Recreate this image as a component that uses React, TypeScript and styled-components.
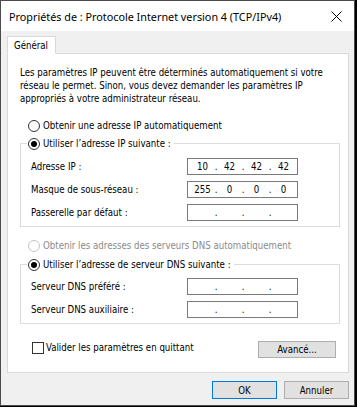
import React from "react";
import styled, { createGlobalStyle } from "styled-components";

const Global = createGlobalStyle`
  html, body { margin: 0; padding: 0; background: #000; }
  body { width: 357px; height: 407px; overflow: hidden; }
  * { box-sizing: border-box; }
`;

const FONT = `"DejaVu Sans Condensed", "DejaVu Sans", "Liberation Sans", sans-serif`;

const Window = styled.div`
  width: 355px;
  height: 406px;
  border: 1px solid #4b4b4b;
  background: #f0f0f0;
  display: flex;
  flex-direction: column;
  font-family: ${FONT};
  font-stretch: condensed;
  font-size: 9.6px;
  color: #000;
`;

const TitleBar = styled.div`
  height: 30px;
  background: #fff;
  display: flex;
  align-items: center;
  justify-content: space-between;
  padding: 0 9px 0 8px;
`;

const Title = styled.div`
  font-family: "Noto Sans", "Liberation Sans", sans-serif;
  font-stretch: normal;
  font-size: 10.8px;
  color: #000;
`;

const Close = styled.div`
  width: 12px;
  height: 12px;
  display: flex;
  align-items: center;
  justify-content: center;
  margin-right: 3px;
`;

const Body = styled.div`
  flex: 1;
  display: flex;
  flex-direction: column;
  padding: 5px 5px 6px 6px;
`;

const TabStrip = styled.div`
  display: flex;
  position: relative;
  z-index: 1;
  margin-bottom: -1px;
`;

const Tab = styled.div<{ $active?: boolean }>`
  height: 18px;
  padding: 0 7px 0 6px;
  display: flex;
  align-items: center;
  background: ${(p) => (p.$active ? "#fff" : "#f0f0f0")};
  border: 1px solid #d9d9d9;
  border-bottom: ${(p) => (p.$active ? "1px solid #fff" : "1px solid #d9d9d9")};
`;

const Panel = styled.div`
  height: 320px;
  background: #fff;
  border: 1px solid #d9d9d9;
  display: flex;
  flex-direction: column;
  padding: 12px 8px 0 12px;
`;

const Para = styled.p`
  margin: 0;
  line-height: 13px;
  white-space: nowrap;
`;

const OptionRow = styled.label<{ $mt: number; $disabled?: boolean }>`
  display: flex;
  align-items: center;
  height: 13px;
  margin-top: ${(p) => p.$mt}px;
  margin-left: 8px;
  gap: 3px;
  color: ${(p) => (p.$disabled ? "#8a8a8a" : "#000")};
`;

const Radio = styled.span<{ $checked?: boolean; $disabled?: boolean }>`
  width: 12px;
  height: 12px;
  border-radius: 50%;
  border: 1px solid ${(p) => (p.$disabled ? "#c4c4c4" : "#333")};
  background: #fff;
  display: flex;
  align-items: center;
  justify-content: center;
  flex: none;
  &::after {
    content: "";
    width: 6px;
    height: 6px;
    border-radius: 50%;
    background: #000;
    display: ${(p) => (p.$checked ? "block" : "none")};
  }
`;

const Group = styled.fieldset<{ $mt: number }>`
  margin: ${(p) => p.$mt}px 0 0 0;
  padding: 0 0 5px 0;
  width: 320px;
  border: 1px solid #dcdcdc;
  min-inline-size: 0;
`;

const Legend = styled.legend`
  margin-left: 6px;
  padding: 0 3px 0 1px;
  height: 13px;
  display: flex;
  align-items: center;
  gap: 3px;
`;

const Rows = styled.div<{ $pt: number }>`
  display: flex;
  flex-direction: column;
  gap: 6px;
  padding-top: ${(p) => p.$pt}px;
`;

const FieldRow = styled.div`
  display: grid;
  grid-template-columns: 156px 111px;
  align-items: center;
  padding-left: 10px;
`;

const IpBox = styled.div`
  height: 17px;
  border: 1px solid #7a7a7a;
  background: #fff;
  display: flex;
  align-items: center;
  padding-left: 3.5px;
`;

const Octet = styled.span`
  width: 22px;
  text-align: center;
`;

const Dot = styled.span`
  width: 5px;
  text-align: center;
`;

const BottomRow = styled.div`
  margin-top: 17px;
  display: flex;
  align-items: flex-start;
  justify-content: space-between;
  padding: 0 4px 0 12px;
  width: 320px;
`;

const CheckLabel = styled.label`
  display: flex;
  align-items: center;
  height: 13px;
  gap: 2px;
`;

const Checkbox = styled.span`
  width: 12px;
  height: 12px;
  border: 1px solid #333;
  background: #fff;
  flex: none;
`;

const Button = styled.button<{ $w: number; $h: number; $default?: boolean }>`
  width: ${(p) => p.$w}px;
  height: ${(p) => p.$h}px;
  padding: 0;
  font-family: ${FONT};
  font-stretch: condensed;
  font-size: 9.6px;
  color: #000;
  background: #e1e1e1;
  border: 1px solid ${(p) => (p.$default ? "#0078d7" : "#adadad")};
`;

const Footer = styled.div`
  margin-top: auto;
  display: flex;
  justify-content: flex-end;
  gap: 7px;
`;

const IpField: React.FC<{ value?: string[] }> = ({ value = ["", "", "", ""] }) => (
  <IpBox>
    <Octet>{value[0]}</Octet>
    <Dot>.</Dot>
    <Octet>{value[1]}</Octet>
    <Dot>.</Dot>
    <Octet>{value[2]}</Octet>
    <Dot>.</Dot>
    <Octet>{value[3]}</Octet>
  </IpBox>
);

export default function App() {
  return (
    <>
      <Global />
      <Window>
        <TitleBar>
          <Title>Propriétés de : Protocole Internet version 4 (TCP/IPv4)</Title>
          <Close>
            <svg width="11" height="11" viewBox="0 0 11 11">
              <path d="M0.5 0.5 L10.5 10.5 M10.5 0.5 L0.5 10.5" stroke="#000" strokeWidth="1" fill="none" />
            </svg>
          </Close>
        </TitleBar>
        <Body>
          <TabStrip>
            <Tab $active>Général</Tab>
          </TabStrip>
          <Panel>
            <Para>
              Les paramètres IP peuvent être déterminés automatiquement si votre
              <br />
              réseau le permet. Sinon, vous devez demander les paramètres IP
              <br />
              appropriés à votre administrateur réseau.
            </Para>
            <OptionRow $mt={14}>
              <Radio />
              Obtenir une adresse IP automatiquement
            </OptionRow>
            <Group $mt={5}>
              <Legend>
                <Radio $checked />
                Utiliser l’adresse IP suivante :
              </Legend>
              <Rows $pt={8}>
                <FieldRow>
                  <span>Adresse IP :</span>
                  <IpField value={["10", "42", "42", "42"]} />
                </FieldRow>
                <FieldRow>
                  <span>Masque de sous-réseau :</span>
                  <IpField value={["255", "0", "0", "0"]} />
                </FieldRow>
                <FieldRow>
                  <span>Passerelle par défaut :</span>
                  <IpField />
                </FieldRow>
              </Rows>
            </Group>
            <OptionRow $mt={12} $disabled>
              <Radio $disabled />
              Obtenir les adresses des serveurs DNS automatiquement
            </OptionRow>
            <Group $mt={6}>
              <Legend>
                <Radio $checked />
                Utiliser l’adresse de serveur DNS suivante :
              </Legend>
              <Rows $pt={7}>
                <FieldRow>
                  <span>Serveur DNS préféré :</span>
                  <IpField />
                </FieldRow>
                <FieldRow>
                  <span>Serveur DNS auxiliaire :</span>
                  <IpField />
                </FieldRow>
              </Rows>
            </Group>
            <BottomRow>
              <CheckLabel>
                <Checkbox />
                Valider les paramètres en quittant
              </CheckLabel>
              <Button $w={78} $h={17}>Avancé...</Button>
            </BottomRow>
          </Panel>
          <Footer>
            <Button $w={65} $h={18} $default>OK</Button>
            <Button $w={65} $h={18}>Annuler</Button>
          </Footer>
        </Body>
      </Window>
    </>
  );
}
